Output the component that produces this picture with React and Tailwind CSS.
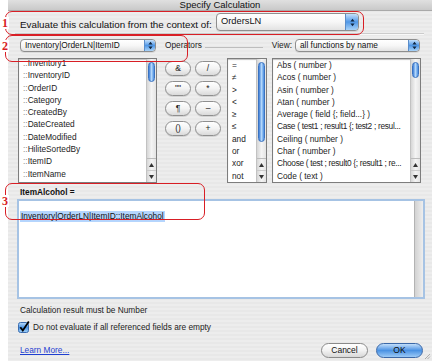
import React from 'react';

const fields = ['Inventory1', 'InventoryID', 'OrderID', 'Category', 'CreatedBy', 'DateCreated', 'DateModified', 'HiliteSortedBy', 'ItemID', 'ItemName'];
const compareOps = ['=', '≠', '>', '<', '≥', '≤', 'and', 'or', 'xor', 'not'];
const functions = [
  'Abs ( number )',
  'Acos ( number )',
  'Asin ( number )',
  'Atan ( number )',
  'Average ( field {; field...} )',
  'Case ( test1 ; result1 {; test2 ; resul...',
  'Ceiling ( number )',
  'Char ( number )',
  'Choose ( test ; result0 {; result1 ; re...',
  'Code ( text )',
];
const opButtons = ['&', '/', '""', '*', '¶', '–', '()', '+'];

const Stepper = ({ wide }) => (
  <div className={`${wide ? 'w-[13px]' : 'w-[11px]'} h-full rounded-r-[3px] border-l border-[#5b8dc9] bg-linear-to-b from-[#c4e0fb] via-[#4f97e6] to-[#a9d3f8] flex items-center justify-center`}>
    <svg width="5" height="9" viewBox="0 0 5 9">
      <path d="M2.5 0.8 L4.6 3.6 L0.4 3.6Z M2.5 8.2 L4.6 5.4 L0.4 5.4Z" fill="#102640" />
    </svg>
  </div>
);

const Select = ({ label, className, textClass, wide }) => (
  <div className={`${className} flex overflow-hidden rounded-[4px] border border-[#8e8e8e] bg-linear-to-b from-white via-[#f7f7f7] to-[#e3e3e3] shadow-[0_1px_0_rgba(0,0,0,0.08)]`}>
    <div className={`flex-1 flex items-center pl-[4px] whitespace-nowrap text-[#111] ${textClass}`}>{label}</div>
    <Stepper wide={wide} />
  </div>
);

const Arrow = ({ up }) => (
  <svg width="5" height="4" viewBox="0 0 5 4">
    <path d={up ? 'M2.5 0 L5 4 L0 4Z' : 'M0 0 L5 0 L2.5 4Z'} fill="#333" />
  </svg>
);

const ScrollBar = ({ thumb }) => (
  <div className="w-[10px] h-full flex flex-col border-l border-[#c2c2c2] bg-linear-to-r from-[#d6d6d6] via-[#f4f4f4] to-[#e4e4e4]">
    <div className="flex-1 flex flex-col px-[1px] pt-[3px]">
      <div className={`${thumb} rounded-full border border-[#3a72c0] bg-linear-to-r from-[#3b7cd6] via-[#b3d7fa] to-[#4a8ee0]`} />
    </div>
    <div className="h-[24px] flex flex-col border-t border-[#bcbcbc]">
      <div className="flex-1 flex items-center justify-center border-b border-[#cacaca]">
        <Arrow up />
      </div>
      <div className="flex-1 flex items-center justify-center">
        <Arrow />
      </div>
    </div>
  </div>
);

const ListBox = ({ className, thumb, offset, children }) => (
  <div className={`${className} h-full flex border border-[#7d7d7d] bg-white shadow-[inset_0_1px_1px_rgba(0,0,0,0.25)]`}>
    <div className={`flex-1 overflow-hidden pl-[4px] ${offset}`}>{children}</div>
    <ScrollBar thumb={thumb} />
  </div>
);

const Row = ({ children, tight }) => (
  <div className={`h-[12.3px] leading-[12.3px] text-[8.3px] whitespace-nowrap text-[#1c1c1c] ${tight ? 'tracking-[-0.3px]' : ''}`}>{children}</div>
);

const RedBox = ({ className }) => (
  <div className={`absolute border-[1.5px] border-[#d81e25] rounded-[7px] ${className}`} />
);

const RedNum = ({ className, n }) => (
  <div className={`absolute left-[1px] bg-white px-[1px] text-[12px] leading-[12px] font-bold text-[#d81e25] font-['Liberation_Serif',serif] ${className}`}>{n}</div>
);

export default function App() {
  return (
    <div className="relative w-[432px] h-[361px] overflow-hidden bg-white flex font-['Liberation_Sans',Arial,sans-serif] text-[#111]">
      <div className="w-[8px]" />
      <div className="relative flex-1 flex flex-col bg-[repeating-linear-gradient(180deg,#ededed_0px,#ededed_2px,#e8e8e8_2px,#e8e8e8_4px)]">
        {/* title bar */}
        <div className="h-[11px] flex items-end justify-center border-b border-[#a9a9a9] bg-linear-to-b from-[#e0e0e0] to-[#c9c9c9]">
          <span className="text-[9.5px] leading-none pb-[1px] text-[#111]">Specify Calculation</span>
        </div>

        {/* context */}
        <div className="mt-[2px] h-[18px] flex items-start pl-[12px]">
          <div className="w-[196px] pt-[6px] text-[9.8px] leading-[12px] whitespace-nowrap">Evaluate this calculation from the context of:</div>
          <Select label="OrdersLN" className="w-[143px] h-[18px]" textClass="text-[9.3px]" wide />
        </div>

        <div className="mt-[2px] ml-[7px] mr-[8px] h-[2px] border-t border-[#cbcbcb] border-b border-b-[#f8f8f8]" />

        {/* table / operators / view */}
        <div className="mt-[4px] h-[13px] flex items-center pl-[12px] pr-[12px]">
          <Select label="Inventory|OrderLN|ItemID" className="w-[136px] h-[13px]" textClass="text-[8.3px]" />
          <div className="ml-[9px] w-[98px] flex items-center">
            <span className="text-[8.3px] text-[#222]">Operators</span>
            <div className="flex-1 ml-[3px] mt-[4px] h-px bg-[#bdbdbd]" />
          </div>
          <span className="ml-auto mr-[3px] text-[8.3px] text-[#222]">View:</span>
          <Select label="all functions by name" className="w-[125px] h-[13px]" textClass="text-[8.3px]" />
        </div>

        {/* lists */}
        <div className="mt-[6px] h-[125px] flex pl-[10px]">
          <ListBox className="w-[139px]" thumb="h-[20px]" offset="-mt-[2px]">
            {fields.map((f) => (
              <Row key={f}>
                <span className="text-[#8a8a8a]">::</span>
                <span>{f}</span>
              </Row>
            ))}
          </ListBox>

          <div className="ml-[8px] pt-[3px] grid grid-cols-[26px_26px] auto-rows-[15px] gap-x-[4px] gap-y-[5px] content-start">
            {opButtons.map((b) => (
              <div key={b} className="rounded-full border border-[#8f8f8f] bg-linear-to-b from-white via-[#f3f3f3] to-[#dadada] flex items-center justify-center text-[8.5px] text-[#222] shadow-[0_1px_0_rgba(0,0,0,0.1)]">
                {b}
              </div>
            ))}
          </div>

          <ListBox className="ml-[6px] w-[40px]" thumb="h-[80px]" offset="">
            {compareOps.map((o) => (
              <Row key={o}>{o}</Row>
            ))}
          </ListBox>

          <ListBox className="ml-[5px] w-[149px]" thumb="h-[16px]" offset="">
            {functions.map((f) => (
              <Row key={f} tight={f.endsWith('...')}>{f}</Row>
            ))}
          </ListBox>
        </div>

        {/* formula */}
        <div className="mt-[3px] h-[12px] leading-[12px] pl-[12px] text-[8.3px] font-bold">ItemAlcohol =</div>
        <div className="mt-[1px] ml-[9px] w-[408px] h-[100px] flex border-2 border-[#a6c3e4] bg-white">
          <div className="flex-1 pt-[1px] pl-[1px]">
            <span className="inline-block px-[1px] bg-[#b5d5fd] text-[8.3px] leading-[11px]">Inventory|OrderLN|ItemID::ItemAlcohol</span>
          </div>
          <div className="w-[9px] border-l border-[#b3b3b3] bg-linear-to-r from-[#d2d2d2] to-[#eeeeee]" />
        </div>

        <div className="mt-[5px] h-[12px] leading-[12px] pl-[12px] text-[8.3px] text-[#222]">Calculation result must be Number</div>

        <div className="mt-[5px] h-[12px] flex items-center gap-[3px] pl-[10px]">
          <svg width="12" height="12" viewBox="0 0 12 12">
            <defs>
              <linearGradient id="cb" x1="0" y1="0" x2="0" y2="1">
                <stop offset="0" stopColor="#c0defb" />
                <stop offset="0.5" stopColor="#4c96e6" />
                <stop offset="1" stopColor="#a4d2f8" />
              </linearGradient>
            </defs>
            <rect x="0.5" y="1.5" width="10" height="10" rx="2" fill="url(#cb)" stroke="#3b6db0" />
            <path d="M2.3 6.3 L4.8 9.4 L10.8 0.6" stroke="#000" strokeWidth="1.8" fill="none" />
          </svg>
          <span className="text-[8.3px] text-[#222] whitespace-nowrap">Do not evaluate if all referenced fields are empty</span>
        </div>

        <div className="mt-[10px] h-[15px] flex items-center pl-[12px] pr-[9px]">
          <span className="text-[8.3px] text-[#1f3fd0] underline">Learn More...</span>
          <div className="ml-auto flex gap-[8px]">
            <div className="w-[47px] h-[15px] rounded-full border border-[#8a8a8a] bg-linear-to-b from-white via-[#f2f2f2] to-[#d8d8d8] flex items-center justify-center text-[8.5px] text-[#111]">
              Cancel
            </div>
            <div className="w-[47px] h-[15px] rounded-full border border-[#3b68a8] bg-linear-to-b from-[#c2defa] via-[#4a92e3] to-[#9bcaf6] flex items-center justify-center text-[8.5px] text-[#0b0b0b]">
              OK
            </div>
          </div>
        </div>

        <svg className="absolute right-[1px] bottom-[1px]" width="7" height="7" viewBox="0 0 7 7">
          <path d="M6 1 L1 6 M6 3.5 L3.5 6" stroke="#9a9a9a" strokeWidth="0.8" />
        </svg>
      </div>

      {/* annotations */}
      <RedBox className="left-[5px] top-[11px] w-[359px] h-[24px]" />
      <RedBox className="left-[5px] top-[35px] w-[183px] h-[27px]" />
      <RedBox className="left-[5px] top-[183px] w-[200px] h-[37px]" />
      <RedNum n="1" className="top-[17px]" />
      <RedNum n="2" className="top-[40px]" />
      <RedNum n="3" className="top-[195px]" />
    </div>
  );
}
